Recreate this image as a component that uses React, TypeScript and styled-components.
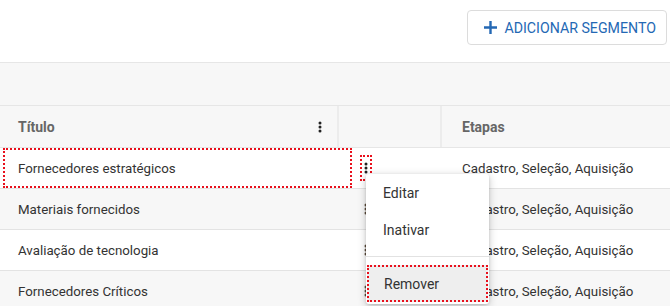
import React from 'react'
import styled, { createGlobalStyle } from 'styled-components'

const GlobalStyle = createGlobalStyle`
  body {
    margin: 0;
    font-family: Roboto, 'Liberation Sans', sans-serif;
    background: #fff;
    overflow: hidden;
  }
`

const rows = [
  { title: 'Fornecedores estratégicos', steps: 'Cadastro, Seleção, Aquisição' },
  { title: 'Materiais fornecidos', steps: 'Cadastro, Seleção, Aquisição' },
  { title: 'Avaliação de tecnologia', steps: 'Cadastro, Seleção, Aquisição' },
  { title: 'Fornecedores Críticos', steps: 'Cadastro, Seleção, Aquisição' },
]

const Kebab = ({ color = '#333' }: { color?: string }) => (
  <svg width="4" height="12" viewBox="0 0 4 12">
    <circle cx="2" cy="2" r="1.5" fill={color} />
    <circle cx="2" cy="6" r="1.5" fill={color} />
    <circle cx="2" cy="10" r="1.5" fill={color} />
  </svg>
)

export default function App() {
  return (
    <Page>
      <GlobalStyle />
      <Toolbar>
        <AddButton>
          <svg width="15" height="15" viewBox="0 0 15 15">
            <path d="M7.5 1v13M1 7.5h13" stroke="#2468b4" strokeWidth="2.4" />
          </svg>
          Adicionar segmento
        </AddButton>
      </Toolbar>
      <Band />
      <Table>
        <HeaderRow>
          <HeaderCell>
            Título
            <Kebab color="#222" />
          </HeaderCell>
          <HeaderCell />
          <HeaderCell>Etapas</HeaderCell>
        </HeaderRow>
        {rows.map((row, i) => (
          <Row key={row.title} $striped={i % 2 === 1}>
            <TitleCell $focused={i === 0}>{row.title}</TitleCell>
            <ActionCell>
              <KebabButton $focused={i === 0}>
                <Kebab color={i === 0 ? '#222' : '#5a4a3a'} />
              </KebabButton>
            </ActionCell>
            <StepsCell>{row.steps}</StepsCell>
          </Row>
        ))}
        <Menu>
          <MenuItem>Editar</MenuItem>
          <MenuItem>Inativar</MenuItem>
          <Divider />
          <MenuItem $active>Remover</MenuItem>
        </Menu>
      </Table>
    </Page>
  )
}

const Page = styled.div`
  width: 670px;
  height: 306px;
  overflow: hidden;
`

const Toolbar = styled.div`
  height: 62px;
  display: flex;
  justify-content: flex-end;
  align-items: flex-start;
  padding: 10px 3px 0 0;
  box-sizing: border-box;
`

const AddButton = styled.button`
  display: flex;
  align-items: center;
  gap: 6px;
  height: 35px;
  padding: 0 10px 0 15px;
  border: 1px solid #dcdcdc;
  border-radius: 4px;
  background: #fff;
  color: #2468b4;
  font-family: Roboto, 'Liberation Sans', sans-serif;
  font-size: 14.2px;
  text-transform: uppercase;
  letter-spacing: 0;
`

const Band = styled.div`
  height: 42px;
  background: #f7f7f7;
  border-top: 1px solid #e6e6e6;
  border-bottom: 1px solid #e6e6e6;
`

const Table = styled.div`
  position: relative;
  width: 670px;
`

const HeaderRow = styled.div`
  display: grid;
  grid-template-columns: 337px 103px 1fr;
  height: 41px;
  background: #f7f7f7;
  border-bottom: 1px solid #e6e6e6;
`

const HeaderCell = styled.div`
  display: flex;
  align-items: center;
  justify-content: space-between;
  padding: 0 15px 0 18px;
  font-size: 14px;
  font-weight: 700;
  color: #666;
  border-left: 2px solid #ececec;
  &:first-child {
    border-left: none;
  }
  &:last-child {
    padding-left: 20px;
  }
`

const Row = styled.div<{ $striped: boolean }>`
  display: grid;
  grid-template-columns: 355px 85px 1fr;
  height: 40px;
  border-bottom: 1px solid #e3e3e3;
  background: ${(p) => (p.$striped ? '#f7f7f7' : '#fff')};
  font-size: 13.3px;
  color: #333;
`

const TitleCell = styled.div<{ $focused: boolean }>`
  display: flex;
  align-items: center;
  outline: ${(p) => (p.$focused ? '2px dotted #e8101c' : 'none')};
  outline-offset: -2px;
  margin: 0 3px;
  padding-left: 15px;
`

const ActionCell = styled.div`
  display: flex;
  align-items: center;
  padding-left: 7px;
`

const KebabButton = styled.div<{ $focused: boolean }>`
  display: flex;
  align-items: center;
  justify-content: center;
  width: 8px;
  height: 22px;
  outline: ${(p) => (p.$focused ? '2px dotted #e8101c' : 'none')};
`

const StepsCell = styled.div`
  display: flex;
  align-items: center;
  padding-left: 22px;
  white-space: nowrap;
`

const Menu = styled.div`
  position: absolute;
  left: 366px;
  top: 68px;
  width: 123px;
  background: #fff;
  border-radius: 3px;
  box-shadow: 0 2px 8px rgba(0, 0, 0, 0.22), 0 1px 3px rgba(0, 0, 0, 0.12);
  padding-bottom: 2px;
`

const MenuItem = styled.div<{ $active?: boolean }>`
  display: flex;
  align-items: center;
  height: 37px;
  padding-left: 17px;
  font-size: 14px;
  color: #333;
  background: ${(p) => (p.$active ? '#eeeeee' : 'transparent')};
  outline: ${(p) => (p.$active ? '2px dotted #e8101c' : 'none')};
  outline-offset: -2px;
  margin: ${(p) => (p.$active ? '0 1px' : '0')};
`

const Divider = styled.div`
  height: 1px;
  background: #e2e2e2;
  margin: 8px 0 8px;
`
